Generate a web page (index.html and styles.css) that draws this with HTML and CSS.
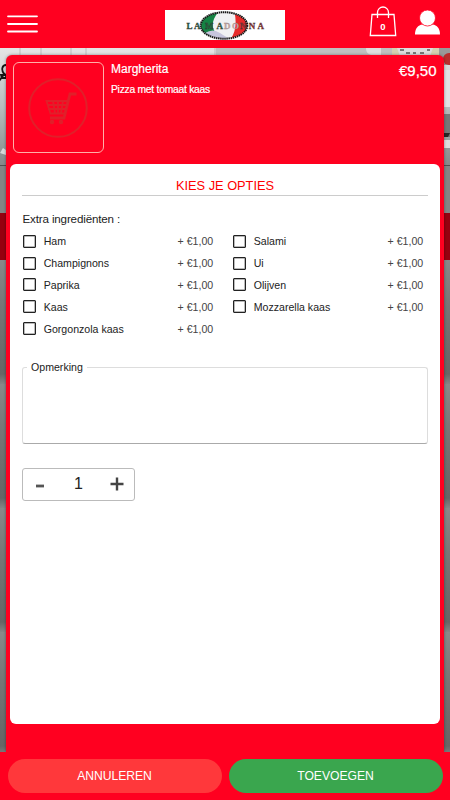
FILE: index.html
```html
<!DOCTYPE html>
<html lang="nl">
<head>
    <meta charset="UTF-8">
    <meta name="viewport" content="width=device-width, initial-scale=1.0">
    <title>La Madonna</title>
    <link rel="stylesheet" href="styles.css">
</head>
<body>
    <header class="header">
        <svg class="menu-icon" width="32" height="20" viewBox="0 0 32 20">
            <path d="M1 2.3h29M1 10h29M1 17.5h29" stroke="#fff" stroke-width="1.8" stroke-linecap="round"/>
        </svg>
        <div class="logo">
            <svg width="120" height="30" viewBox="0 0 120 30">
                <defs>
                    <clipPath id="oval"><ellipse cx="59" cy="15.5" rx="23" ry="13"/></clipPath>
                </defs>
                <g clip-path="url(#oval)">
                    <rect x="35" width="49" height="30" fill="#f1f1f3"/>
                    <path d="M35 0h20c-8 9-9 16-5 22l-7 8h-8z" fill="#168344"/>
                    <path d="M71 0h13v30H65c6-8 7-18 4-30z" fill="#e72b2a"/>
                    <path d="M40 23q8-5 15 0t13 7H40z" fill="#c7c5dd"/>
                </g>
                <ellipse cx="59" cy="15.5" rx="23.3" ry="13.3" fill="none" stroke="#161616" stroke-width="2" stroke-dasharray="1.5 .6"/>
                <text class="logo-text" x="21.5" y="18.7" textLength="14" fill="#27653f">LA</text>
                <text class="logo-text" x="40" y="18.7" textLength="18" fill="#27653f">MA</text>
                <text class="logo-text light" x="59" y="18.7" textLength="15" fill="#c5a8a6">DO</text>
                <text class="logo-text" x="75" y="18.7" textLength="24" fill="#a33232">NNA</text>
            </svg>
        </div>
        <div class="header-right">
            <svg width="28" height="32" viewBox="0 0 28 32" fill="none" stroke="#fff" stroke-width="1.3">
                <path d="M3 8.5h22l1.7 21H1.3z"/>
                <path d="M8.5 12V6.5a5.5 5.5 0 0 1 11 0V12"/>
                <text class="bag-count" x="14" y="24" text-anchor="middle">0</text>
            </svg>
            <svg width="25" height="25" viewBox="0 0 25 25" fill="#fff">
                <path d="M0 24.500c0-6 3-9.500 7.500-10h10c4.500.5 7.500 4 7.500 10z"/>
                <circle cx="12.500" cy="8" r="8" stroke="#ff0020" stroke-width=".8"/>
            </svg>
        </div>
    </header>

    <main class="backdrop">
        <svg class="photo" width="450" height="117" viewBox="0 0 450 117">
            <defs>
                <linearGradient id="wall" x2="0" y2="1">
                    <stop offset="0" stop-color="#e5e5e5"/>
                    <stop offset=".5" stop-color="#b8bebe"/>
                    <stop offset="1" stop-color="#858a8a"/>
                </linearGradient>
            </defs>
            <rect width="450" height="117" fill="url(#wall)"/>
            <path d="M20 0v8M41 0v8M71 0v8M86 0v8M215 0v8" stroke="#bcbcbc"/>
            <path d="M216 0h176v8H216z" fill="#bfbfbf"/>
            <path d="M366 0c0 4 2 6 5 7h10V0z" fill="#dedede"/>
            <path d="M392 0h47v8h-47z" fill="#d4d0b1"/>
            <path d="M397 0h36l-3 8h-30z" fill="#ddd"/>
            <path d="M400 2h4M406 5h4M413 5h3M420 5h4M427 2h3" stroke="#555" stroke-width="1.5"/>
            <path d="M439 0h11v17h-11z" fill="#999"/>
            <circle cx="449" cy="11" r="6" fill="#b92c2c"/>
            <path d="M443 22h7v37h-7z" fill="#e1e3e4"/>
            <path d="M443 66h7v23h-7z" fill="#777"/>
            <path d="M443 85h7l-2 4h-5z" fill="#262626"/>
            <path d="M443 92h7v8h-7z" fill="#dedede"/>
            <path d="M6 17c-4 0-5 5-2 9l2 1M5 25l-6 8M1 27h5v3H2z" stroke="#161616" stroke-width="1.8" fill="none"/>
            <path d="M0 105l3-5 3 2v5z" fill="#d6dada"/>
        </svg>
        <div class="search-strip"></div>
        <div class="category-strip"></div>
        <div class="product-list"></div>
    </main>

    <section class="modal">
        <div class="product">
            <div class="product-image">
                <svg width="60" height="60" viewBox="0 0 60 60" fill="none" stroke="#e0202a">
                    <circle cx="30" cy="30" r="28.8" stroke-width="2"/>
                    <path d="M48.500 16h-6.500l-6 24H22" stroke-width="2.800"/>
                    <path d="M18.500 23h21.500l-3 12.500H22.500zM19 27h20M20 31h18M25 23l2 12M30 23v12M35 23l-2 12" stroke-width="1.8"/>
                    <circle cx="24" cy="44" r="1.200" stroke-width="2"/>
                    <circle cx="33" cy="44" r="1.200" stroke-width="2"/>
                </svg>
            </div>
            <div class="product-info">
                <h1>Margherita</h1>
                <p>Pizza met tomaat kaas</p>
            </div>
            <span class="product-price">€9,50</span>
        </div>

        <form class="options">
            <h2>KIES JE OPTIES</h2>
            <p class="group-title">Extra ingrediënten :</p>
            <div class="ingredients">
                <label><input type="checkbox"><span>Ham</span><b>+ €1,00</b></label>
                <label><input type="checkbox"><span>Salami</span><b>+ €1,00</b></label>
                <label><input type="checkbox"><span>Champignons</span><b>+ €1,00</b></label>
                <label><input type="checkbox"><span>Ui</span><b>+ €1,00</b></label>
                <label><input type="checkbox"><span>Paprika</span><b>+ €1,00</b></label>
                <label><input type="checkbox"><span>Olijven</span><b>+ €1,00</b></label>
                <label><input type="checkbox"><span>Kaas</span><b>+ €1,00</b></label>
                <label><input type="checkbox"><span>Mozzarella kaas</span><b>+ €1,00</b></label>
                <label><input type="checkbox"><span>Gorgonzola kaas</span><b>+ €1,00</b></label>
            </div>
            <fieldset class="remark">
                <legend>Opmerking</legend>
            </fieldset>
            <div class="quantity">
                <button type="button" aria-label="minder">
                    <svg width="14" height="14" viewBox="0 0 14 14"><path d="M3 9h8" stroke="#555" stroke-width="2.8"/></svg>
                </button>
                <span>1</span>
                <button type="button" aria-label="meer">
                    <svg width="14" height="14" viewBox="0 0 14 14"><path d="M.5 7h13M7 .5v13" stroke="#444" stroke-width="2.4"/></svg>
                </button>
            </div>
        </form>
    </section>

    <footer class="actions">
        <button type="button" class="btn cancel-btn">ANNULEREN</button>
        <button type="button" class="btn add-btn">TOEVOEGEN</button>
    </footer>
</body>
</html>
```

FILE: styles.css
```css
* {
    box-sizing: border-box;
}
body {
    margin: 0;
    height: 800px;
    overflow: hidden;
    display: flex;
    flex-direction: column;
    font-family: "Liberation Sans", Arial, sans-serif;
    color: #222;
}
h1, h2, p {
    margin: 0;
    font-weight: normal;
}
button {
    font-family: inherit;
    border: none;
    padding: 0;
    cursor: pointer;
}
svg {
    display: block;
}
.header {
    height: 48px;
    flex: none;
    display: grid;
    grid-template-columns: 1fr 120px 1fr;
    align-items: center;
    padding: 0 10px 0 7px;
    background-color: #ff0020;
}
.menu-icon {
    margin-top: -1px;
}
.logo {
    width: 120px;
    height: 30px;
    margin: 2px 0 0 1.5px;
    background-color: #fff;
}
.logo-text {
    font: bold 9px "Liberation Serif", serif;
    stroke: #333;
    stroke-width: .3px;
}
.logo-text.light {
    stroke: #a08886;
}
.header-right {
    display: flex;
    justify-content: flex-end;
    align-items: center;
    gap: 18px;
    padding-bottom: 4px;
}
.bag-count {
    font-size: 9.5px;
    font-weight: bold;
    fill: #fff;
    stroke: none;
}

/* page behind the modal */
.backdrop {
    flex: 1;
    display: flex;
    flex-direction: column;
}
.photo {
    flex: none;
}
.search-strip {
    height: 48px;
    background-color: #858585;
    border-top: 1px solid #505050;
}
.category-strip {
    height: 47px;
    background-color: #96000f;
}
.product-list {
    flex: 1;
    background: repeating-linear-gradient(#898989 0, #777 45px, #6a6a6a 95px, #666 114px, #858585 124px);
}

.modal {
    position: absolute;
    top: 55px;
    left: 6px;
    width: 438px;
    height: 697px;
    padding: 7px 4px 28px;
    display: flex;
    flex-direction: column;
    background-color: #ff0020;
    border-radius: 6px 6px 0 0;
    box-shadow: 0 0 3px rgba(0, 0, 0, 0.4);
    clip-path: inset(-7px -6px 0);
}
.product {
    display: flex;
    height: 102px;
    padding: 0 3.5px 0 3px;
    color: #fff;
}
.product-image {
    width: 91px;
    height: 91px;
    display: flex;
    justify-content: center;
    align-items: center;
    padding-right: 1px;
    border: 1px solid #ffb0a8;
    border-radius: 6px;
}
.product-info {
    flex: 1;
    padding-left: 7px;
}
.product-info h1 {
    font-size: 12px;
    line-height: 14px;
    -webkit-text-stroke: .2px #fff;
}
.product-info p {
    margin-top: 7px;
    font-size: 10.3px;
    line-height: 13px;
    letter-spacing: -.25px;
    -webkit-text-stroke: .2px #fff;
}
.product-price {
    font-size: 15px;
    line-height: 17px;
    -webkit-text-stroke: .25px #fff;
}
.options {
    flex: 1;
    padding: 13px 12px 0;
    background-color: #fff;
    border-radius: 6px;
}
.options h2 {
    height: 19px;
    border-bottom: 1px solid #ccc;
    color: #f00;
    font-size: 12.8px;
    line-height: 17px;
    text-align: center;
}
.group-title {
    margin-top: 16px;
    padding-left: .5px;
    font-size: 11.6px;
    line-height: 14px;
    letter-spacing: -.15px;
}
.ingredients {
    display: grid;
    grid-template-columns: 190.5px 190.5px;
    column-gap: 19.5px;
    grid-auto-rows: 21.8px;
    margin: 4.5px 0 0 .7px;
}
.ingredients label {
    display: flex;
    align-items: center;
    font-size: 10.6px;
}
.ingredients input {
    appearance: none;
    width: 13px;
    height: 13px;
    margin: 0 8px 0 0;
    border: 1px solid #222;
    border-radius: 1px;
    box-shadow: inset 0 0 0 .5px #777;
}
.ingredients b {
    margin-left: auto;
    font-weight: normal;
    color: #444;
}
.remark {
    height: 83px;
    margin: 21.5px 0 0;
    padding: 0 4px;
    border: 1px solid #ddd;
    border-bottom-color: #aaa;
    border-radius: 3px;
}
.remark legend {
    padding: 0 4px;
    font-size: 10.6px;
    line-height: 13px;
}
.quantity {
    width: 113px;
    height: 33px;
    margin-top: 24px;
    padding: 0 10px;
    display: flex;
    justify-content: space-between;
    align-items: center;
    border: 1px solid #bbb;
    border-radius: 3px;
    font-size: 16px;
}
.quantity button {
    background: none;
}
.actions {
    height: 48px;
    flex: none;
    display: grid;
    grid-template-columns: 214px 214px;
    gap: 7px;
    padding: 7px 0 0 7.5px;
    background-color: #ff0020;
}
.btn {
    height: 34px;
    border-radius: 17px;
    color: #fff;
    font-size: 12.2px;
    letter-spacing: -.05px;
}
.cancel-btn {
    background-color: #ff383b;
}
.add-btn {
    background-color: #3aa64e;
}
```
